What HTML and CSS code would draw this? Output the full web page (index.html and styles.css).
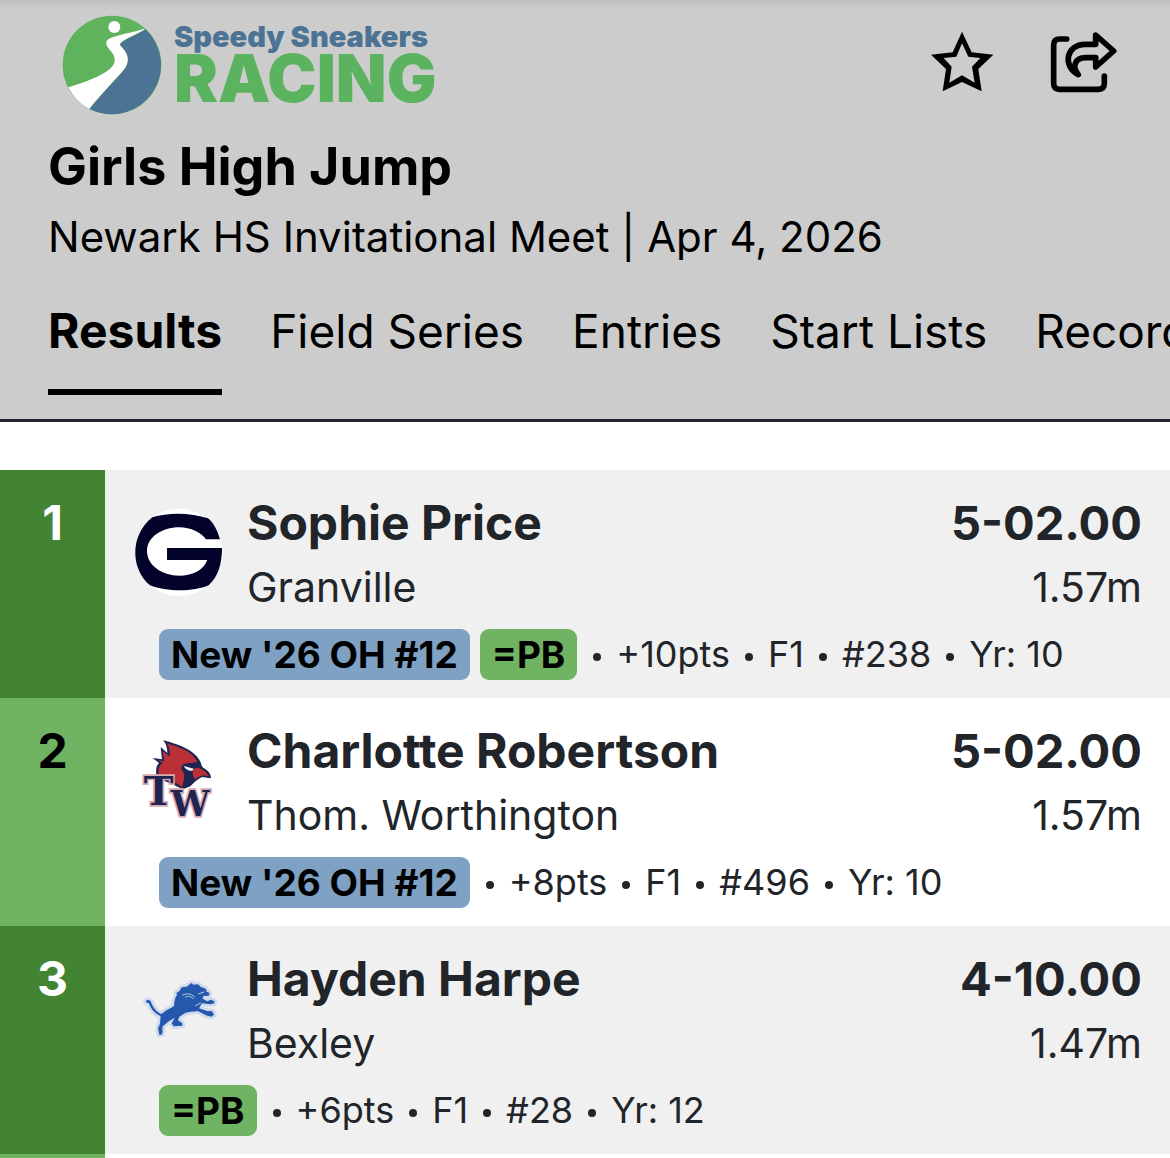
FILE: index.html
```html
<!DOCTYPE html>
<html lang="en">
<head>
  <meta charset="UTF-8">
  <meta name="viewport" content="width=device-width, initial-scale=1.0">
  <title>Girls High Jump</title>
  <link rel="stylesheet" href="styles.css">
</head>
<body>
  <header class="header">
    <div class="top-bar">
      <a class="brand" href="#">
        <svg class="brand-mark" viewBox="66 43 300 300" aria-hidden="true">
          <circle cx="216" cy="193" r="148" fill="#5fb35d"/>
          <path fill="#4d7394" d="M315 84A148 148 0 0 1 148 325C190 275 230 235 255 203C275 170 258 155 240 132C245 118 290 105 315 84Z"/>
          <path fill="#fff" d="M313 84C275 96 230 102 206 115C192 124 200 138 214 153C228 170 228 186 212 203C185 228 130 246 85 260A148 148 0 0 0 148 325C185 278 228 236 255 203C272 175 262 156 239 132C245 116 290 103 315 86Z"/>
          <circle cx="223" cy="79" r="18" fill="#fff"/>
        </svg>
        <span class="brand-text">
          <span class="brand-name">Speedy Sneakers</span>
          <span class="brand-sub">RACING</span>
        </span>
      </a>
      <div class="actions">
        <button type="button" class="icon-button" aria-label="Favorite">
          <svg class="star-icon" viewBox="88 64 192 186">
            <path fill-rule="evenodd" d="M184 66L213 128L278 135L233 178L243 245L184 217L126 245L136 178L91 135L156 128ZM184 101L203 141L239 145L214 171L222 219L184 197L146 219L153 171L129 145L167 141Z"/>
          </svg>
        </button>
        <button type="button" class="icon-button" aria-label="Share">
          <svg class="share-icon" viewBox="450 62 216 186" fill="none" stroke="#000" stroke-width="17" stroke-linecap="round" stroke-linejoin="round">
            <path d="M500 86H479Q461 86 461 104V219Q461 237 479 237H595Q613 237 613 219V197"/>
            <path d="M587 74L641 122L587 170V142H556C528 142 513 166 535 193C488 170 496 102 556 102H587Z"/>
          </svg>
        </button>
      </div>
    </div>
    <h1 class="event-title">Girls High Jump</h1>
    <p class="event-meet">Newark HS Invitational Meet | Apr 4, 2026</p>
    <nav class="tabs">
      <a class="tab active" href="#results">Results</a>
      <a class="tab" href="#series">Field Series</a>
      <a class="tab" href="#entries">Entries</a>
      <a class="tab" href="#start-lists">Start Lists</a>
      <a class="tab" href="#records">Records</a>
    </nav>
  </header>

  <main>
    <ol class="results" id="results">
      <li class="result">
        <div class="place">1</div>
        <div class="result-body">
          <div class="result-main">
            <svg class="team-logo" viewBox="45 24 264 264" aria-hidden="true">
              <circle cx="177" cy="157" r="131" fill="#fff"/>
              <path fill="#03022b" d="M300 118C292 88 278 66 264 55C215 38 145 36 97 52C30 105 30 205 90 256C140 276 220 276 266 256C295 230 306 190 306 144H141V180H262C250 213 215 227 178 227C125 227 81 195 81 153C81 112 125 82 178 82C213 82 243 97 258 118Z"/>
            </svg>
            <div class="athlete">
              <h2 class="name">Sophie Price</h2>
              <p class="team">Granville</p>
            </div>
            <div class="mark">
              <p class="name">5-02.00</p>
              <p class="team">1.57m</p>
            </div>
          </div>
          <div class="details">
            <span class="badge badge-rank">New '26 OH #12</span>
            <span class="badge badge-pb">=PB</span>
            <ul class="facts">
              <li>+10pts</li>
              <li>F1</li>
              <li>#238</li>
              <li>Yr: 10</li>
            </ul>
          </div>
        </div>
      </li>

      <li class="result">
        <div class="place">2</div>
        <div class="result-body">
          <div class="result-main">
            <svg class="team-logo" viewBox="15 18 264 264" aria-hidden="true">
              <path fill="#1d2550" d="M99 30C137 42 190 55 210 93C215 103 213 108 221 114C235 122 243 132 243 145L216 141C199 149 190 160 181 169L159 178L80 142C76 118 79 107 87 99L68 84L96 88L92 51L112 69C112 52 108 41 99 30Z"/>
              <path fill="#bb3036" d="M110 40C142 51 185 61 202 95C192 99 178 98 164 101C153 105 151 116 158 124C165 131 164 145 156 172L140 160L88 140C82 119 86 107 99 100L84 91L103 94L98 63L119 79C121 62 117 51 110 40Z"/>
              <path fill="#bb3036" d="M192 116C204 110 225 119 237 139C220 133 208 137 195 148C189 139 184 127 192 116Z"/>
              <path fill="#fff" d="M161 108L191 116L187 122Q170 124 161 108Z"/>
              <g class="monogram">
                <text class="monogram-t" x="41" y="224">T</text>
                <text x="122" y="258">W</text>
              </g>
            </svg>
            <div class="athlete">
              <h2 class="name">Charlotte Robertson</h2>
              <p class="team">Thom. Worthington</p>
            </div>
            <div class="mark">
              <p class="name">5-02.00</p>
              <p class="team">1.57m</p>
            </div>
          </div>
          <div class="details">
            <span class="badge badge-rank">New '26 OH #12</span>
            <ul class="facts">
              <li>+8pts</li>
              <li>F1</li>
              <li>#496</li>
              <li>Yr: 10</li>
            </ul>
          </div>
        </div>
      </li>

      <li class="result">
        <div class="place">3</div>
        <div class="result-body">
          <div class="result-main">
            <svg class="team-logo" viewBox="15 12 264 264" aria-hidden="true">
              <path fill="#2557ad" stroke="#cfdaed" stroke-width="16" stroke-linejoin="round" paint-order="stroke" d="M48 122Q56 117 62 124C68 142 80 157 94 162L100 158C108 150 122 146 132 138C133 124 135 112 141 105L139 99L148 94L155 82L170 80L184 69L190 74L205 73L211 80L228 87L230 95L239 99L236 107L220 108L218 116L232 124L243 119L253 124V130L241 133L216 130L207 145L231 153L246 154L252 164L244 170L228 166L203 153C190 156 176 154 164 160L148 170L144 181L157 190V197L131 199L125 190L134 174C120 180 108 190 97 200L98 216L95 224H88L84 205L90 191L92 168C74 162 62 145 57 130L48 127Z"/>
              <path fill="none" stroke="#b7c9e6" stroke-width="3" stroke-linecap="round" d="M158 105C171 99 184 101 194 111M166 111C175 107 184 110 190 116M205 102L222 96M197 137L212 129"/>
            </svg>
            <div class="athlete">
              <h2 class="name">Hayden Harpe</h2>
              <p class="team">Bexley</p>
            </div>
            <div class="mark">
              <p class="name">4-10.00</p>
              <p class="team">1.47m</p>
            </div>
          </div>
          <div class="details">
            <span class="badge badge-pb">=PB</span>
            <ul class="facts">
              <li>+6pts</li>
              <li>F1</li>
              <li>#28</li>
              <li>Yr: 12</li>
            </ul>
          </div>
        </div>
      </li>
    </ol>
    <div class="results-end"></div>
  </main>
</body>
</html>
```
FILE: styles.css
```css
* {
  box-sizing: border-box;
}
body {
  margin: 0;
  font-family: Inter, "Liberation Sans", sans-serif;
  color: #212529;
  background: #fff;
  overflow-x: hidden;
}
h1, h2, p, ul, ol {
  margin: 0;
  padding: 0;
}
a {
  color: inherit;
  text-decoration: none;
}

/* Header */
.header {
  padding: 0 48px 24px;
  color: #000;
  background: linear-gradient(#bebebe, #ccc 10px);
  border-bottom: 3px solid #25232d;
}
.top-bar {
  display: flex;
  justify-content: space-between;
  align-items: center;
  height: 130px;
}
.brand {
  display: flex;
  align-items: center;
  gap: 12px;
  padding-left: 14px;
}
.brand-mark {
  width: 100px;
  height: 100px;
}
.brand-text {
  display: flex;
  flex-direction: column;
  padding-bottom: 4px;
  font-weight: 900;
}
.brand-name {
  font-size: 29px;
  line-height: 30px;
  color: #4d7394;
}
.brand-sub {
  font-size: 66px;
  line-height: 52px;
  color: #5bb35f;
}
.actions {
  display: flex;
  gap: 56px;
  padding-bottom: 6px;
}
.icon-button {
  padding: 0;
  border: none;
  background: none;
  cursor: pointer;
}
.icon-button svg {
  display: block;
  height: 62px;
}
.star-icon {
  width: 64px;
}
.share-icon {
  width: 72px;
}
.event-title {
  font-size: 52px;
  line-height: 74px;
  font-weight: 700;
}
.event-meet {
  font-size: 42px;
  line-height: 66px;
}
.tabs {
  display: flex;
  gap: 48px;
  margin: 31px -48px 0 0;
  overflow: hidden;
  font-size: 46px;
  line-height: 60px;
}
.tab {
  flex: none;
  padding-bottom: 28px;
  border-bottom: 6px solid transparent;
}
.tab.active {
  font-size: 48px;
  font-weight: 700;
  border-bottom-color: #000;
}

/* Results */
.results {
  margin-top: 48px;
  list-style: none;
}
.result {
  display: flex;
}
.place {
  flex: 0 0 105px;
  padding-top: 20px;
  font-size: 48px;
  line-height: 65px;
  font-weight: 700;
  text-align: center;
  color: #000;
  background: #70b362;
}
.result:nth-child(odd) .place {
  color: #fff;
  background: #438434;
}
.result:nth-child(odd) .result-body {
  background: #f0f0f0;
}
.result-body {
  flex: 1;
  padding: 20px 28px 18px 30px;
}
.result-main {
  display: flex;
  align-items: flex-start;
  gap: 24px;
}
.team-logo {
  flex: none;
  width: 88px;
  height: 88px;
  margin-top: 18px;
}
.monogram {
  font-family: "DejaVu Serif", serif;
  font-size: 104px;
  font-weight: 700;
  fill: #1d2550;
  stroke: #d9a9b0;
  stroke-width: 10px;
  paint-order: stroke;
}
.monogram-t {
  font-size: 120px;
}
.athlete {
  flex: 1;
}
.mark {
  text-align: right;
}
.name {
  font-size: 48px;
  line-height: 65px;
  font-weight: 700;
}
.mark .name {
  font-size: 47px;
}
.team {
  font-size: 41px;
  line-height: 65px;
}
.details {
  display: flex;
  align-items: center;
  gap: 10px;
  margin-top: 9px;
  padding-left: 24px;
  font-size: 36px;
  line-height: 51px;
}
.badge {
  padding: 0 12px;
  border-radius: 9px;
  font-size: 37px;
  font-weight: 700;
  color: #000;
}
.badge-rank {
  background: #7fa1c4;
}
.badge-pb {
  background: #70b362;
}
.facts {
  display: flex;
  list-style: none;
}
.facts li {
  display: flex;
  align-items: center;
}
.facts li::before {
  content: "";
  width: 8px;
  height: 8px;
  margin: 4px 15px 0;
  border-radius: 50%;
  background: #212529;
}
.facts li:first-child::before {
  margin-left: 6px;
}
.results-end {
  height: 4px;
  background: linear-gradient(to right, #70b362 105px, #fff 105px);
}
```
